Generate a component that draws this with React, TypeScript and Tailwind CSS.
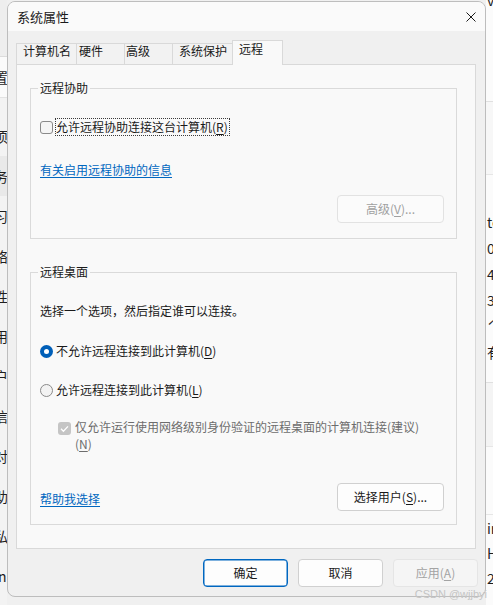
import React from "react";

function Acc({ k }: { k: string }) {
  return (
    <>
      (<span className="underline underline-offset-2">{k}</span>)
    </>
  );
}

function LeftStrip() {
  const rows = ["项", "务", "习", "络", "性", "用", "户", "信", "对", "助", "私", "n"];
  return (
    <div className="flex w-[7px] shrink-0 flex-col overflow-hidden bg-[#f3f3f3] text-[14px] text-[#1f1f1f]">
      <div className="h-[57px] shrink-0 border-b border-[#dcdcdc] bg-[#eeeeee]" />
      <div className="flex h-[41px] shrink-0 items-center border-b border-[#e3e3e3] bg-[#fbfbfb]">
        <span className="-ml-[6px] whitespace-nowrap leading-[16px]">置</span>
      </div>
      <div className="h-[18px] shrink-0" />
      {rows.map((c, i) => (
        <div
          key={i}
          className={`flex h-[40px] shrink-0 items-center ${i === 1 ? "bg-[#e9e9e9]" : ""}`}
        >
          <span className={`whitespace-nowrap leading-[16px] ${c === "n" ? "-ml-[2px]" : "-ml-[6px]"}`}>{c}</span>
        </div>
      ))}
    </div>
  );
}

function RightStrip() {
  const rows = ["te", "0(", "4", "3", "ˊ", "有"];
  const low = ["ir", "H", "2"];
  return (
    <div className="flex w-[7px] shrink-0 flex-col overflow-hidden bg-[#fbfbfb] text-[14px] text-[#1f1f1f]">
      <div className="h-[102px] shrink-0 border-b border-[#e0e0e0]">
        <span className="-mt-[8px] block whitespace-nowrap pl-px leading-[16px]">v</span>
      </div>
      <div className="h-[73px] shrink-0 border-b border-[#e6e6e6] bg-[#f7f7f7]" />
      <div className="h-[34px] shrink-0" />
      {rows.map((c, i) => (
        <div key={i} className="flex h-[26px] shrink-0 items-center">
          <span className="whitespace-nowrap pl-px leading-[16px]">{c}</span>
        </div>
      ))}
      <div className="h-[18px] shrink-0 border-b border-[#e0e0e0]" />
      <div className="h-[64px] shrink-0 border-b border-[#e6e6e6] bg-[#f4f4f4]" />
      <div className="h-[68px] shrink-0 border-b border-[#e6e6e6]" />
      {low.map((c, i) => (
        <div key={i} className="flex h-[25px] shrink-0 items-center">
          <span className="whitespace-nowrap pl-px leading-[16px]">{c}</span>
        </div>
      ))}
    </div>
  );
}

function Tabs() {
  const tabs = [
    { label: "计算机名", w: "w-[60px] pl-[6px]" },
    { label: "硬件", w: "w-[48px] pl-[2px]" },
    { label: "高级", w: "w-[48px] pl-[1px]" },
    { label: "系统保护", w: "w-[60px] pl-[6px]" },
  ];
  return (
    <div className="flex items-end">
      {tabs.map((t) => (
        <div
          key={t.label}
          className={`h-[21px] border-l border-t border-[#d9d9d9] bg-[#f2f2f2] leading-[14px] ${t.w}`}
        >
          {t.label}
        </div>
      ))}
      <div className="relative z-10 -mb-px h-[25px] w-[51px] border-x border-t border-[#d9d9d9] bg-[#f9f9f9] pl-[6px] pt-px leading-[14px]">
        远程
      </div>
    </div>
  );
}

function CheckMark() {
  return (
    <svg width="13" height="13" viewBox="0 0 13 13">
      <path d="M3 6.8 L5.4 9.2 L10 4.4" fill="none" stroke="#ffffff" strokeWidth="1.3" />
    </svg>
  );
}

function Panel() {
  return (
    <div className="h-[485px] border border-[#d9d9d9] bg-[#f9f9f9] pl-[13px] pr-[18px] pt-[16px]">
      <fieldset className="border border-[#dadada] pb-[15px] pl-[9px] pr-[12px]">
        <legend className="-ml-[2px] px-[2px] leading-[14px]">远程协助</legend>
        <div className="mt-[23px] flex h-[18px] items-center">
          <span className="h-[13px] w-[13px] shrink-0 rounded-[3px] border border-[#8a8a8a] bg-[#f5f5f5]" />
          <span className="ml-[2px] border border-dotted border-[#3a3a3a] pr-px leading-[16px]">
            允许远程协助连接这台计算机<Acc k="R" />
          </span>
        </div>
        <div className="mt-[26px] w-fit leading-[16px] text-[#0067c0] underline underline-offset-2">
          有关启用远程协助的信息
        </div>
        <div className="mt-[17px] flex justify-end">
          <div className="flex h-[28px] w-[107px] items-center justify-center rounded-[4px] border border-[#e2e2e2] bg-[#fbfbfb] text-[#a0a0a0]">
            高级<Acc k="V" />...
          </div>
        </div>
      </fieldset>

      <fieldset className="mt-[26px] border border-[#dadada] pb-[13px] pl-[9px] pr-[12px]">
        <legend className="-ml-[2px] px-[2px] leading-[14px]">远程桌面</legend>
        <div className="mt-[24px] leading-[16px]">选择一个选项，然后指定谁可以连接。</div>
        <div className="mt-[24px] flex h-[16px] items-center gap-[3px]">
          <span className="flex h-[13px] w-[13px] shrink-0 items-center justify-center rounded-full bg-[#005fb8]">
            <span className="h-[5px] w-[5px] rounded-full bg-white" />
          </span>
          <span className="leading-[16px]">
            不允许远程连接到此计算机<Acc k="D" />
          </span>
        </div>
        <div className="mt-[23px] flex h-[16px] items-center gap-[3px]">
          <span className="h-[13px] w-[13px] shrink-0 rounded-full border border-[#8a8a8a] bg-[#f3f3f3]" />
          <span className="leading-[16px]">
            允许远程连接到此计算机<Acc k="L" />
          </span>
        </div>
        <div className="ml-[18px] mt-[20px] flex gap-[4px]">
          <span className="mt-[4px] h-[13px] w-[13px] shrink-0 rounded-[3px] bg-[#c5c5c5]">
            <CheckMark />
          </span>
          <span className="leading-[17px] text-[#6d6d6d]">
            仅允许运行使用网络级别身份验证的远程桌面的计算机连接(建议)
            <br />
            <Acc k="N" />
          </span>
        </div>
        <div className="mt-[31px] flex items-center justify-between">
          <span className="mt-[4px] leading-[16px] text-[#0067c0] underline underline-offset-2">帮助我选择</span>
          <div className="flex h-[28px] w-[107px] items-center justify-center rounded-[4px] border border-[#d0d0d0] bg-[#fdfdfd]">
            选择用户<Acc k="S" />...
          </div>
        </div>
      </fieldset>
    </div>
  );
}

function Dialog() {
  return (
    <div className="mt-px flex h-[596px] w-[479px] shrink-0 flex-col overflow-hidden rounded-[8px] border border-[#bdbdbd] bg-[#f0f0f0]">
      <div className="flex h-[29px] shrink-0 items-center justify-between bg-[#fafafa] pl-[9px] pr-[9px]">
        <span className="text-[13px] leading-[16px]">系统属性</span>
        <svg width="10" height="10" viewBox="0 0 10 10">
          <path d="M0.5 0.5 L9.5 9.5 M9.5 0.5 L0.5 9.5" stroke="#1a1a1a" strokeWidth="1" />
        </svg>
      </div>
      <div className="ml-[8px] mr-[9px] flex flex-col pt-[9px]">
        <Tabs />
        <Panel />
      </div>
      <div className="mt-[10px] flex justify-end gap-[10px] pr-[7px]">
        <div className="flex h-[28px] w-[85px] items-center justify-center rounded-[4px] border border-[#0067c0] bg-[#fdfdfd] shadow-[inset_0_0_0_0.5px_#0067c0]">
          确定
        </div>
        <div className="flex h-[28px] w-[85px] items-center justify-center rounded-[4px] border border-[#d0d0d0] bg-[#fdfdfd]">
          取消
        </div>
        <div className="flex h-[28px] w-[85px] items-center justify-center rounded-[4px] border border-[#e5e5e5] bg-[#f5f5f5] text-[#a3a3a3]">
          应用<Acc k="A" />
        </div>
      </div>
    </div>
  );
}

export default function App() {
  return (
    <div className="relative flex h-[605px] w-[493px] overflow-hidden bg-[#f0f0f0] font-['Noto_Sans_CJK_SC',sans-serif] text-[12px] text-[#1a1a1a]">
      <LeftStrip />
      <Dialog />
      <RightStrip />
      <div className="pointer-events-none absolute bottom-[5px] right-[6px] font-['Liberation_Sans',sans-serif] text-[11px] leading-[12px] text-[#c4c4c4]">
        CSDN @wjjbyi
      </div>
    </div>
  );
}
